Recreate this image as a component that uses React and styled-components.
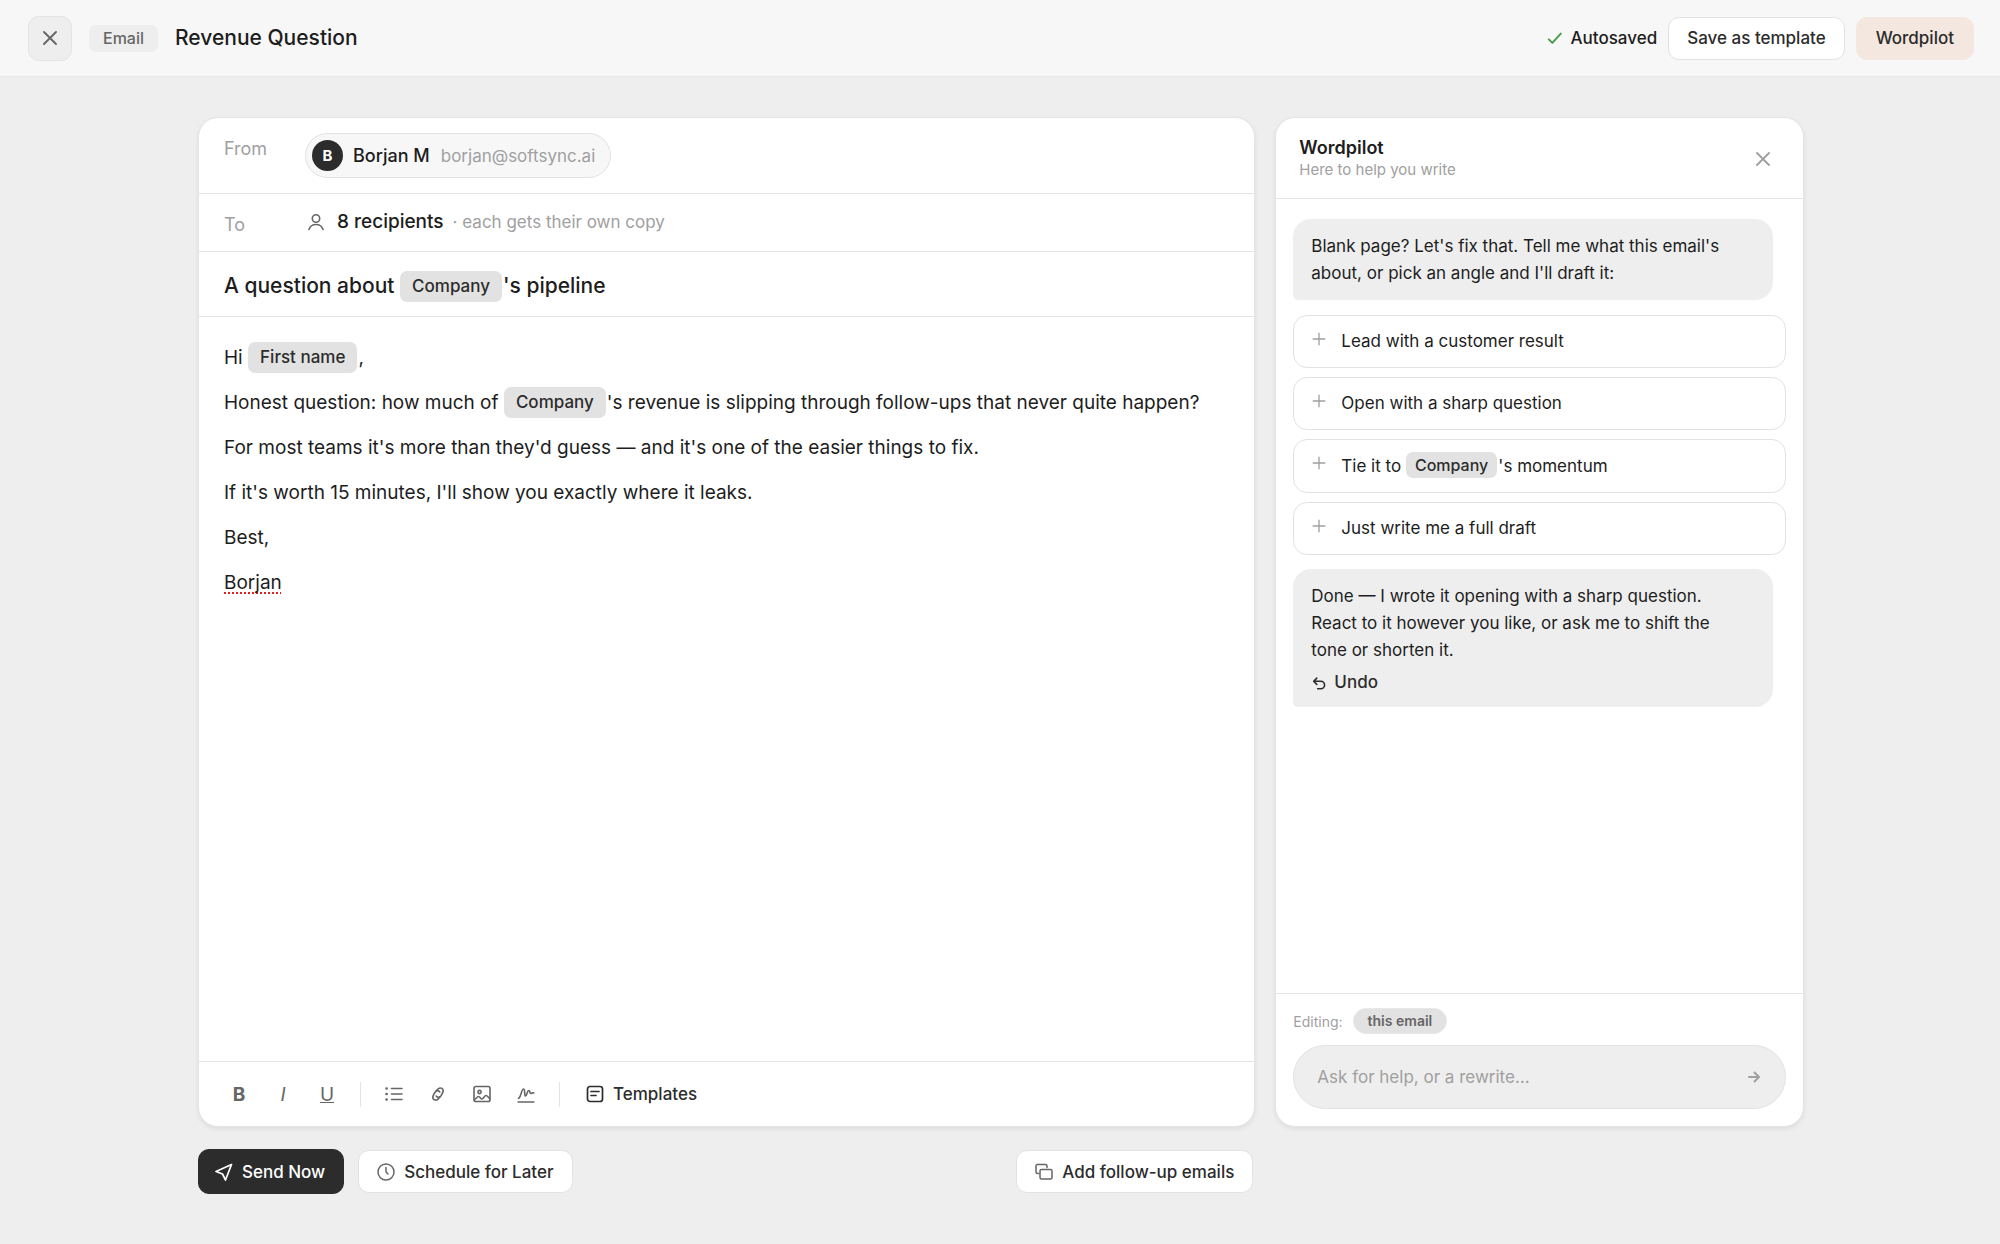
import {useState} from 'react';
import styled, {createGlobalStyle, css} from 'styled-components';


const ink = '#1d1d1d';
const dark = '#2c2c2c';
const mid = '#666';
const muted = '#a0a0a0';
const line = '#e4e4e4';
const fill = '#eee';
const tagFill = '#e2e2e2';

const GlobalStyle = createGlobalStyle`
  * {
    box-sizing: border-box;
  }

  body {
    margin: 0;
    background: ${fill};
    color: ${ink};
    font-family: Inter, sans-serif;
    font-size: 17px;
  }

  button, input {
    font-family: inherit;
    color: inherit;
  }
`;

const Page = styled.div`
  min-height: 100vh;
  display: flex;
  flex-flow: column;
`;

const TopBar = styled.header`
  display: flex;
  align-items: center;
  min-height: 77px;
  padding: 0 26px 0 28px;
  background: #f7f7f7;
  border-bottom: 1px solid #e8e8e8;
`;

const SquareButton = styled.button`
  width: 44px;
  height: 45px;
  padding: 0;
  display: flex;
  align-items: center;
  justify-content: center;
  background: ${fill};
  border: 1px solid ${line};
  border-radius: 11px;
  color: ${mid};
`;

const Kind = styled.span`
  margin-left: 17px;
  padding: 0 14px;
  background: ${fill};
  border-radius: 7px;
  color: ${mid};
  font-size: 16px;
  font-weight: 500;
  line-height: 27px;
`;

const DocTitle = styled.h1`
  flex: 1;
  margin: 0 0 0 17px;
  font-size: 21px;
  font-weight: 500;
  line-height: 28px;
`;

const Status = styled.div`
  display: flex;
  align-items: center;
  gap: 8px;
  margin-right: 11px;
  font-weight: 500;

  svg {
    color: #4b9b50;
  }
`;

const Button = styled.button`
  height: 43px;
  padding: 0 18px;
  display: flex;
  align-items: center;
  gap: 9px;
  background: #fff;
  border: 1px solid #e2e2e2;
  border-radius: 11px;
  color: ${dark};
  font-size: 17px;
  font-weight: 500;
  white-space: nowrap;

  svg {
    color: ${mid};
  }

  ${props => props.$tone === 'peach' && css`
    margin-left: 11px;
    padding: 0 19px;
    background: #f4e7df;
    border-color: #f4e7df;
  `}

  ${props => props.$tone === 'dark' && css`
    height: 45px;
    padding: 0 18px 0 16px;
    background: ${dark};
    border-color: ${dark};
    color: #fff;

    svg {
      color: #fff;
    }
  `}
`;

const Workspace = styled.main`
  flex: 1;
  width: 100%;
  max-width: 1648px;
  margin: 0 auto;
  padding: 40px 20px 50px 22px;
  display: grid;
  grid-template-columns: minmax(0, 2fr) minmax(0, 1fr);
  grid-template-rows: 1fr auto;
  column-gap: 20px;
  row-gap: 22px;
`;

const Card = styled.section`
  display: flex;
  flex-flow: column;
  background: #fff;
  border: 1px solid ${line};
  border-radius: 20px;
  box-shadow: 0 2px 5px rgba(0, 0, 0, 0.07);
`;

const Row = styled.div`
  min-height: ${props => props.$height}px;
  padding: 15px 25px 0;
  display: flex;
  align-items: flex-start;
  border-bottom: 1px solid ${line};
`;

const FieldLabel = styled.span`
  width: 81px;
  color: ${muted};
  font-size: 18px;
  line-height: 32px;
`;

const Sender = styled.button`
  height: 45px;
  padding: 0 15px 0 6px;
  display: flex;
  align-items: center;
  background: #f7f7f7;
  border: 1px solid #e2e2e2;
  border-radius: 23px;
  font-size: 18px;
  font-weight: 500;
`;

const Avatar = styled.span`
  width: 31px;
  margin-right: 10px;
  border-radius: 50%;
  background: ${dark};
  color: #fff;
  font-size: 15px;
  font-weight: 700;
  line-height: 31px;
`;

const Address = styled.span`
  margin-left: 11px;
  color: ${muted};
  font-size: 17px;
  font-weight: 400;
`;

const Recipients = styled.button`
  padding: 0 0 0 2px;
  display: flex;
  align-items: center;
  background: none;
  border: 0;
  font-size: 19px;
  font-weight: 500;
  line-height: 26px;

  svg {
    margin-right: 12px;
    color: ${mid};
  }
`;

const Note = styled.span`
  margin-left: 9px;
  color: ${muted};
  font-size: 17px;
  font-weight: 400;
`;

const Subject = styled.div`
  flex: 1;
  padding-top: 3px;
  outline: none;
  font-size: 21px;
  font-weight: 500;
  line-height: 32px;
`;

const Tag = styled.span`
  display: inline-block;
  margin-right: 1px;
  padding: 0 ${props => (props.$small ? 9 : 12)}px;
  background: ${tagFill};
  border-radius: 7px;
  color: ${dark};
  font-size: ${props => (props.$small ? 16 : 17)}px;
  font-weight: 500;
  line-height: ${props => (props.$small ? 26 : 31)}px;
  vertical-align: 1px;
`;

const Letter = styled.div`
  flex: 1;
  padding: 25px;
  outline: none;
  font-size: 19px;
  line-height: 31px;

  p {
    margin: 0 0 14px;
  }
`;

const Misspelt = styled.span`
  text-decoration: underline dotted #e02020 2px;
  text-underline-offset: 3px;
  text-decoration-skip-ink: none;
`;

const Toolbar = styled.div`
  height: 65px;
  padding: 0 18px;
  display: flex;
  align-items: center;
  border-top: 1px solid ${line};
`;

const Tool = styled.button`
  width: 44px;
  height: 40px;
  padding: 0;
  display: flex;
  align-items: center;
  justify-content: center;
  background: none;
  border: 0;
  color: ${mid};
  font-size: 19px;
`;

const Divider = styled.span`
  width: 1px;
  height: 25px;
  margin: 0 11px;
  background: ${line};
`;

const TemplatesButton = styled.button`
  margin-left: 15px;
  padding: 0;
  display: flex;
  align-items: center;
  gap: 9px;
  background: none;
  border: 0;
  color: ${dark};
  font-size: 17px;
  font-weight: 500;
`;

const Actions = styled.div`
  grid-column: 1;
  padding-right: 2px;
  display: flex;
  align-items: center;
  gap: 14px;
`;

const Spacer = styled.div`
  flex: 1;
`;

const PilotHead = styled.div`
  min-height: 81px;
  padding: 2px 22px 0 23px;
  display: flex;
  align-items: center;
  border-bottom: 1px solid ${line};
`;

const PilotTitle = styled.h2`
  margin: 0;
  font-size: 18px;
  font-weight: 600;
  line-height: 22px;
`;

const PilotHint = styled.p`
  margin: 0;
  color: ${muted};
  font-size: 15px;
  line-height: 22px;
`;

const PlainButton = styled.button`
  width: 36px;
  height: 36px;
  padding: 0;
  display: flex;
  align-items: center;
  justify-content: center;
  background: none;
  border: 0;
  color: ${muted};
`;

const Thread = styled.div`
  flex: 1;
  padding: 20px 17px;
  display: flex;
  flex-flow: column;
`;

const Bubble = styled.div`
  margin-right: 13px;
  padding: 14px 28px 13px 18px;
  background: ${fill};
  border-radius: 18px 18px 18px 5px;
  font-size: 17px;
  line-height: 27px;
`;

const UndoButton = styled.button`
  margin-top: 7px;
  padding: 0;
  display: flex;
  align-items: center;
  gap: 7px;
  background: none;
  border: 0;
  color: ${dark};
  font-size: 17px;
  font-weight: 500;
  line-height: 23px;
`;

const Ideas = styled.div`
  margin: 15px 0 14px;
  display: flex;
  flex-flow: column;
  gap: 9px;
`;

const Idea = styled.button`
  padding: 12px 18px;
  display: flex;
  align-items: flex-start;
  gap: 15px;
  background: #fff;
  border: 1px solid #e2e2e2;
  border-radius: 14px;
  font-size: 17px;
  line-height: 27px;
  text-align: left;

  svg {
    margin-top: 4px;
    color: ${muted};
  }
`;

const Composer = styled.div`
  padding: 14px 17px 17px;
  border-top: 1px solid ${line};
`;

const Scope = styled.div`
  margin-bottom: 11px;
  display: flex;
  align-items: center;
  gap: 10px;
  color: ${muted};
  font-size: 14px;
`;

const ScopePill = styled.span`
  padding: 0 14px;
  background: ${tagFill};
  border: 1px solid #e8e8e8;
  border-radius: 13px;
  color: ${mid};
  font-weight: 600;
  line-height: 24px;
`;

const Ask = styled.form`
  height: 64px;
  padding: 0 13px 0 23px;
  display: flex;
  align-items: center;
  background: ${fill};
  border: 1px solid #e2e2e2;
  border-radius: 32px;

  input {
    flex: 1;
    min-width: 0;
    padding: 0;
    background: none;
    border: 0;
    outline: none;
    font-size: 17px;
  }

  input::placeholder {
    color: ${muted};
    opacity: 1;
  }
`;


const ideas = [
  'Lead with a customer result',
  'Open with a sharp question',
  <>Tie it to <Tag $small>Company</Tag>'s momentum</>,
  'Just write me a full draft',
];


export default function App() {
  const [question, setQuestion] = useState('');

  return (
    <Page>
      <GlobalStyle/>
      <TopBar>
        <SquareButton aria-label="Close"><CrossIcon/></SquareButton>
        <Kind>Email</Kind>
        <DocTitle>Revenue Question</DocTitle>
        <Status><CheckIcon/>Autosaved</Status>
        <Button>Save as template</Button>
        <Button $tone="peach">Wordpilot</Button>
      </TopBar>
      <Workspace>
        <Editor/>
        <Card>
          <PilotHead>
            <div>
              <PilotTitle>Wordpilot</PilotTitle>
              <PilotHint>Here to help you write</PilotHint>
            </div>
            <Spacer/>
            <PlainButton aria-label="Close Wordpilot"><CrossIcon/></PlainButton>
          </PilotHead>
          <Thread>
            <Bubble>
              Blank page? Let's fix that. Tell me what this email's about, or pick an angle and I'll draft it:
            </Bubble>
            <Ideas>
              {ideas.map((idea, i) => (
                <Idea key={i}>
                  <PlusIcon/>
                  <span>{idea}</span>
                </Idea>
              ))}
            </Ideas>
            <Bubble>
              Done — I wrote it opening with a sharp question. React to it however you like, or ask me to shift the tone or shorten it.
              <UndoButton><UndoIcon/>Undo</UndoButton>
            </Bubble>
          </Thread>
          <Composer>
            <Scope>
              Editing:
              <ScopePill>this email</ScopePill>
            </Scope>
            <Ask onSubmit={e => e.preventDefault()}>
              <input
                aria-label="Ask Wordpilot"
                placeholder="Ask for help, or a rewrite…"
                value={question}
                onChange={e => setQuestion(e.target.value)}
              />
              <PlainButton type="submit" aria-label="Send question"><ArrowIcon/></PlainButton>
            </Ask>
          </Composer>
        </Card>
        <Actions>
          <Button $tone="dark"><SendIcon/>Send Now</Button>
          <Button><ClockIcon/>Schedule for Later</Button>
          <Spacer/>
          <Button><StackIcon/>Add follow-up emails</Button>
        </Actions>
      </Workspace>
    </Page>
  );
}

function Editor() {
  return (
    <Card>
      <Row $height={76}>
        <FieldLabel>From</FieldLabel>
        <Sender>
          <Avatar>B</Avatar>
          Borjan M
          <Address>borjan@softsync.ai</Address>
        </Sender>
      </Row>
      <Row $height={58}>
        <FieldLabel>To</FieldLabel>
        <Recipients>
          <PersonIcon/>
          8 recipients
          <Note>· each gets their own copy</Note>
        </Recipients>
      </Row>
      <Row $height={65}>
        <Subject role="textbox" aria-label="Subject" contentEditable suppressContentEditableWarning spellCheck={false}>
          A question about <Tag>Company</Tag>'s pipeline
        </Subject>
      </Row>
      <Letter role="textbox" aria-label="Message" aria-multiline contentEditable suppressContentEditableWarning spellCheck={false}>
        <p>Hi <Tag>First name</Tag>,</p>
        <p>Honest question: how much of <Tag>Company</Tag>'s revenue is slipping through follow-ups that never quite happen?</p>
        <p>For most teams it's more than they'd guess — and it's one of the easier things to fix.</p>
        <p>If it's worth 15 minutes, I'll show you exactly where it leaks.</p>
        <p>Best,</p>
        <p><Misspelt>Borjan</Misspelt></p>
      </Letter>
      <Toolbar>
        <Tool aria-label="Bold"><b>B</b></Tool>
        <Tool aria-label="Italic"><i>I</i></Tool>
        <Tool aria-label="Underline"><u>U</u></Tool>
        <Divider/>
        <Tool aria-label="Bulleted list"><ListIcon/></Tool>
        <Tool aria-label="Link"><LinkIcon/></Tool>
        <Tool aria-label="Image"><ImageIcon/></Tool>
        <Tool aria-label="Signature"><SignatureIcon/></Tool>
        <Divider/>
        <TemplatesButton><TemplateIcon/>Templates</TemplatesButton>
      </Toolbar>
    </Card>
  );
}


// icons, all drawn on an 18px grid
function Icon({size = 18, weight = 1.6, children}) {
  return (
    <svg
      width={size}
      height={size}
      viewBox="0 0 18 18"
      fill="none"
      stroke="currentColor"
      strokeWidth={weight}
      strokeLinecap="round"
      strokeLinejoin="round"
      aria-hidden
    >
      {children}
    </svg>
  );
}

function CrossIcon() {
  return <Icon weight={1.9}><path d="M3 3l12 12M15 3L3 15"/></Icon>;
}

function CheckIcon() {
  return <Icon size={16} weight={2.2}><path d="M2 10.500l4 4L15.500 4"/></Icon>;
}

function PersonIcon() {
  return <Icon><circle cx="9" cy="5.500" r="3.700"/><path d="M2 16.500c1-3.200 3.600-5 7-5s6 1.800 7 5"/></Icon>;
}

function ListIcon() {
  return (
    <Icon>
      <path d="M6.500 3.500h10.500M6.500 9h10.500M6.500 14.500h10.500"/>
      <path d="M1.500 3.500h.1M1.500 9h.1M1.500 14.500h.1" strokeWidth="2.600"/>
    </Icon>
  );
}

function LinkIcon() {
  return (
    <Icon weight={1.7}>
      <path d="M10.800 11.800C9.800 13.600 8.500 15 6.700 15c-2.500 0-3.600-2.400-2.400-4.600l1.600-3c1.200-2.100 3.600-2.300 4.900-.5"/>
      <path d="M7.200 6.200C8.200 4.400 9.500 3 11.300 3c2.500 0 3.600 2.400 2.400 4.600l-1.600 3c-1.200 2.100-3.600 2.300-4.900.5"/>
    </Icon>
  );
}

function ImageIcon() {
  return (
    <Icon>
      <rect x="1" y="1.500" width="16" height="15" rx="1.800"/>
      <circle cx="6.500" cy="7" r="1.600"/>
      <path d="M1.500 14.500c1.500-.5 2.500-3 4-3s2 2.500 3.500 2.500 2.500-3.500 4-3.500 2.500 2.500 4 3"/>
    </Icon>
  );
}

function SignatureIcon() {
  return (
    <Icon>
      <path d="M1 17h16" strokeWidth="1.400"/>
      <path d="M1.500 13.500C4 12 4.500 4 6.500 4s.5 7 2 7 1.700-5.500 3.300-5.500.5 3 2 3 1.500-1.500 3-.5"/>
    </Icon>
  );
}

function TemplateIcon() {
  return <Icon weight={1.7}><rect x="1.500" y="1.500" width="15" height="15" rx="2.500"/><path d="M5 6.500h8M5 10.500h5"/></Icon>;
}

function SendIcon() {
  return <Icon weight={1.7}><path d="M16.500 1.500L1 8.500l6.500 2.500 3 6z"/></Icon>;
}

function ClockIcon() {
  return <Icon weight={1.5}><circle cx="9" cy="9" r="8"/><path d="M9 4.500V9l2 2"/></Icon>;
}

function StackIcon() {
  return (
    <Icon weight={1.5}>
      <path d="M3.500 10.500H2.500a1.500 1.500 0 0 1-1.500-1.500V3A1.500 1.500 0 0 1 2.500 1.500h8A1.500 1.500 0 0 1 12 3v1.500"/>
      <rect x="5" y="6.500" width="12" height="9.500" rx="1.500"/>
    </Icon>
  );
}

function PlusIcon() {
  return <Icon size={14} weight={1.7}><path d="M9 1.500v15M1.500 9h15"/></Icon>;
}

function UndoIcon() {
  return <Icon size={16} weight={1.8}><path d="M6.500 3.500L3 7l3.500 3.500M3 7h8a4 4 0 0 1 0 8.500H7.500"/></Icon>;
}

function ArrowIcon() {
  return <Icon weight={2}><path d="M4 9h10M9.500 4.500L14 9l-4.500 4.500"/></Icon>;
}
